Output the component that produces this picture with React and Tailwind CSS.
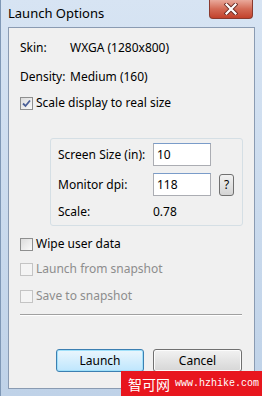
import { useState } from 'react'

const Checkbox = ({ checked, disabled, label, onChange }) => (
  <label className={`flex items-center h-4 ${disabled ? 'text-[#8d8d8d]' : 'text-black'}`}>
    <span
      onClick={() => !disabled && onChange && onChange(!checked)}
      className={`w-[13px] h-[13px] border flex items-center justify-center mr-[3px] ${
        disabled ? 'border-[#c4c4c4] bg-[#f4f4f4]' : 'border-[#8e8f8f] bg-gradient-to-br from-[#dcdcdc] to-[#fafafa]'
      }`}
    >
      {checked && (
        <svg width="9" height="9" viewBox="0 0 9 9">
          <path d="M1 4.5 L3.5 7 L8 1.5" fill="none" stroke="#4a5f97" strokeWidth="1.8" />
        </svg>
      )}
    </span>
    <span>{label}</span>
  </label>
)

const Field = ({ value }) => (
  <div className="w-[58px] h-[23px] border border-[#abadb3] border-t-[#7a9cc9] bg-white pl-[3px] flex items-center">
    {value}
  </div>
)

const App = () => {
  const [scale, setScale] = useState(true)
  const [wipe, setWipe] = useState(false)

  return (
    <div
      className="relative w-[262px] h-[396px] overflow-hidden bg-gradient-to-b from-[#d7e4f3] to-[#bfd2e8] border-l border-[#7f98b6] text-[12px] leading-4"
      style={{ fontFamily: '"Noto Sans", "Liberation Sans", sans-serif' }}
    >
      {/* title bar */}
      <div className="h-[27px] flex items-start justify-between">
        <div className="pl-[7px] pt-[5px] text-[13px] text-black">Launch Options</div>
        <div className="mr-[9px] w-[44px] h-[19px] rounded-b-[4px] border border-t-0 border-[#8a3a2e] bg-gradient-to-b from-[#e9a99b] via-[#d36a55] to-[#c2412b] flex items-center justify-center">
          <svg width="14" height="12" viewBox="0 0 14 12">
            <path d="M2.5 1.5 L11.5 10.5 M11.5 1.5 L2.5 10.5" stroke="#6a2a22" strokeWidth="4" strokeLinecap="square" />
            <path d="M2.5 1.5 L11.5 10.5 M11.5 1.5 L2.5 10.5" stroke="#ffffff" strokeWidth="2.2" strokeLinecap="square" />
          </svg>
        </div>
      </div>

      {/* client area */}
      <div className="ml-[7px] mr-[7px] h-[362px] border border-[#8a9bb2] bg-[#f0f0f0] pl-[11px] pr-[12px]">
        <div className="mt-[12px] flex">
          <span className="w-[50px]">Skin:</span>
          <span>WXGA (1280x800)</span>
        </div>
        <div className="mt-[13px] flex">
          <span className="w-[50px]">Density:</span>
          <span>Medium (160)</span>
        </div>
        <div className="mt-[10px]">
          <Checkbox checked={scale} label="Scale display to real size" onChange={setScale} />
        </div>

        <div className="mt-[27px] ml-[30px] w-[193px] border border-[#d5dfe5] rounded-[3px] pl-[7px] pt-[4px] pb-[5px]">
          <div className="flex items-center">
            <span className="w-[95px]">Screen Size (in):</span>
            <Field value="10" />
          </div>
          <div className="mt-[7px] flex items-center">
            <span className="w-[95px]">Monitor dpi:</span>
            <Field value="118" />
            <button className="ml-[8px] w-[15px] h-[22px] border border-[#707070] rounded-[3px] bg-gradient-to-b from-[#f2f2f2] to-[#d4d4d4] text-[12px] flex items-center justify-center">
              ?
            </button>
          </div>
          <div className="mt-[8px] flex">
            <span className="w-[95px]">Scale:</span>
            <span>0.78</span>
          </div>
        </div>

        <div className="mt-[10px]">
          <Checkbox checked={wipe} label="Wipe user data" onChange={setWipe} />
        </div>
        <div className="mt-[9px]">
          <Checkbox disabled label="Launch from snapshot" />
        </div>
        <div className="mt-[11px]">
          <Checkbox disabled label="Save to snapshot" />
        </div>

        <div className="mt-[10px] border-t border-[#a0a0a0] border-b border-b-white" />

        <div className="mt-[33px] flex justify-end gap-[9px]">
          <button className="w-[88px] h-[23px] rounded-[3px] border border-[#3c7fb1] bg-gradient-to-b from-[#eaf6fd] to-[#bee6fd] shadow-[inset_0_0_0_1px_#9fe0fa]">
            Launch
          </button>
          <button className="w-[89px] h-[23px] rounded-[3px] border border-[#707070] bg-gradient-to-b from-[#f2f2f2] to-[#d6d6d6] shadow-[inset_0_0_0_1px_#fcfcfc]">
            Cancel
          </button>
        </div>
      </div>

      {/* watermark */}
      <div className="absolute left-[120px] top-[371px] w-[142px] h-[25px] bg-[#e8161e] text-white flex items-center pl-[7px] whitespace-nowrap">
        <span className="shrink-0 text-[14px] leading-4" style={{ fontFamily: '"Noto Sans CJK SC", sans-serif' }}>智可网</span>
        <span className="shrink-0 ml-[5px] text-[10px] leading-4" style={{ fontFamily: '"Liberation Mono", monospace' }}>www.hzhike.com</span>
      </div>
    </div>
  )
}

export default App
